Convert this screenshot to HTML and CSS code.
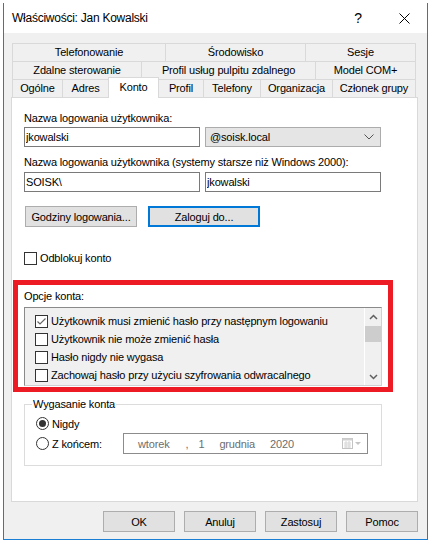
FILE: index.html
```html
<!DOCTYPE html>
<html lang="pl">
<head>
<meta charset="UTF-8">
<title>Właściwości: Jan Kowalski</title>
<link rel="stylesheet" href="styles.css">
</head>
<body>
<div class="window">
  <div class="titlebar">
    <span class="title">Właściwości: Jan Kowalski</span>
    <span class="caption-btn help">?</span>
    <span class="caption-btn">
      <svg width="11" height="11" viewBox="0 0 11 11"><path d="M0.5 0.5 L10.5 10.5 M10.5 0.5 L0.5 10.5" stroke="#000" stroke-width="1" fill="none"/></svg>
    </span>
  </div>

  <div class="client">
    <div class="tabs">
      <div class="tab-row row-1">
        <div class="tab">Telefonowanie</div>
        <div class="tab">Środowisko</div>
        <div class="tab">Sesje</div>
      </div>
      <div class="tab-row row-2">
        <div class="tab">Zdalne sterowanie</div>
        <div class="tab">Profil usług pulpitu zdalnego</div>
        <div class="tab">Model COM+</div>
      </div>
      <div class="tab-row row-3">
        <div class="tab">Ogólne</div>
        <div class="tab">Adres</div>
        <div class="tab active">Konto</div>
        <div class="tab">Profil</div>
        <div class="tab">Telefony</div>
        <div class="tab">Organizacja</div>
        <div class="tab">Członek grupy</div>
      </div>
    </div>

    <div class="panel">
      <div class="field-label">Nazwa logowania użytkownika:</div>
      <div class="field-pair">
        <input class="textbox" type="text" value="jkowalski" readonly>
        <div class="combo">
          <span>@soisk.local</span>
          <svg width="10" height="6" viewBox="0 0 10 6"><path d="M0.5 0.5 L5 5 L9.5 0.5" stroke="#555" stroke-width="1" fill="none"/></svg>
        </div>
      </div>

      <div class="field-label second">Nazwa logowania użytkownika (systemy starsze niż Windows 2000):</div>
      <div class="field-pair second">
        <input class="textbox" type="text" value="SOISK\" readonly>
        <input class="textbox" type="text" value="jkowalski" readonly>
      </div>

      <div class="btn-row">
        <button class="btn wide">Godziny logowania...</button>
        <button class="btn wide focused">Zaloguj do...</button>
      </div>

      <div class="check-row unlock"><span class="checkbox"></span>Odblokuj konto</div>

      <div class="highlight">
        <div class="field-label">Opcje konta:</div>
        <div class="listbox">
          <div class="list-items">
            <div class="check-row">
              <span class="checkbox">
                <svg width="11" height="11" viewBox="0 0 11 11"><path d="M1.5 5.5 L4 8 L9.5 2.5" stroke="#666" stroke-width="1.2" fill="none"/></svg>
              </span>Użytkownik musi zmienić hasło przy następnym logowaniu
            </div>
            <div class="check-row"><span class="checkbox"></span>Użytkownik nie może zmienić hasła</div>
            <div class="check-row"><span class="checkbox"></span>Hasło nigdy nie wygasa</div>
            <div class="check-row"><span class="checkbox"></span>Zachowaj hasło przy użyciu szyfrowania odwracalnego</div>
          </div>
          <div class="scrollbar">
            <div class="arrow">
              <svg width="9" height="6" viewBox="0 0 9 6"><path d="M1 5 L4.5 1.5 L8 5" stroke="#606060" stroke-width="1.5" fill="none"/></svg>
            </div>
            <div class="thumb"></div>
            <div class="track"></div>
            <div class="arrow">
              <svg width="9" height="6" viewBox="0 0 9 6"><path d="M1 1 L4.5 4.5 L8 1" stroke="#606060" stroke-width="1.5" fill="none"/></svg>
            </div>
          </div>
        </div>
      </div>

      <fieldset class="group">
        <legend>Wygasanie konta</legend>
        <div class="radio-row first"><span class="radio checked"></span>Nigdy</div>
        <div class="radio-row">
          <span class="radio"></span>
          <span class="radio-label">Z końcem:</span>
          <div class="datepicker">
            <span class="dp-day">wtorek</span>
            <span class="dp-comma">,</span>
            <span class="dp-num">1</span>
            <span class="dp-month">grudnia</span>
            <span class="dp-year">2020</span>
            <svg class="dp-icon" width="20" height="11" viewBox="0 0 20 11">
              <rect x="0.5" y="0.5" width="10" height="10" fill="#fff" stroke="#c4c4c4"/>
              <rect x="0.5" y="0.5" width="10" height="2" fill="#d0d0d0"/>
              <path d="M2 5H9M2 7H9M2 9H9M4 3V10M7 3V10" stroke="#d6d6d6" stroke-width="1"/>
              <path d="M13 4 L19 4 L16 7 Z" fill="#c4c4c4"/>
            </svg>
          </div>
        </div>
      </fieldset>
    </div>

    <div class="dialog-buttons">
      <button class="btn">OK</button>
      <button class="btn">Anuluj</button>
      <button class="btn">Zastosuj</button>
      <button class="btn">Pomoc</button>
    </div>
  </div>
</div>
</body>
</html>
```

FILE: styles.css
```css
* {
  box-sizing: border-box;
}
body {
  margin: 0;
  background: #ffffff;
  font-family: "Liberation Sans", Arial, sans-serif;
  font-size: 11px;
  letter-spacing: -0.15px;
  color: #000;
}
.window {
  margin: 3px 0 0 3px;
  width: 425px;
  height: 537px;
  border: 1px solid #1a7fd4;
  border-top: none;
  background: #f0f0f0;
  display: flex;
  flex-direction: column;
}

/* title bar */
.titlebar {
  height: 30px;
  background: #fff;
  display: flex;
  align-items: center;
  padding-left: 8px;
}
.title {
  flex: 1;
  font-size: 12px;
  letter-spacing: -0.25px;
}
.caption-btn {
  width: 45px;
  height: 30px;
  display: flex;
  align-items: center;
  justify-content: center;
}
.caption-btn.help {
  font-size: 14px;
  padding-right: 3px;
}

/* client area */
.client {
  flex: 1;
  padding: 10px 9px 0 7px;
}
.tabs {
  margin-left: 1px;
  width: 404px;
}
.tab-row {
  display: grid;
  height: 18px;
  border-top: 1px solid #d9d9d9;
  border-left: 1px solid #d9d9d9;
}
.row-1 {
  grid-template-columns: 153px 140px 110px;
}
.row-2 {
  grid-template-columns: 129px 174px 100px;
}
.row-3 {
  grid-template-columns: 50px 46px 50px 45px 57px 72px 83px;
}
.tab {
  border-right: 1px solid #d9d9d9;
  text-align: center;
  line-height: 17px;
  white-space: nowrap;
  background: #f0f0f0;
}
.tab.active {
  position: relative;
  z-index: 1;
  background: #fff;
  margin: -3px 0 -1px -1px;
  border-top: 1px solid #d9d9d9;
  border-left: 1px solid #d9d9d9;
  line-height: 18px;
}

/* tab page */
.panel {
  height: 405px;
  background: #fff;
  border: 1px solid #d9d9d9;
  padding: 13px 35px 0 12px;
}
.field-label {
  line-height: 15px;
  white-space: nowrap;
}
.field-label.second {
  margin-top: 8px;
}
.field-pair {
  display: grid;
  grid-template-columns: 176px 176px;
  column-gap: 5px;
  margin-top: 1px;
}
.field-pair.second {
  margin-top: 2px;
}
.textbox {
  height: 20px;
  border: 1px solid #7a7a7a;
  padding: 0 1px;
  margin: 0;
  font: inherit;
  letter-spacing: inherit;
  color: #000;
  background: #fff;
  outline: none;
}
.combo {
  height: 20px;
  border: 1px solid #acacac;
  background: #e5e5e5;
  display: flex;
  align-items: center;
  justify-content: space-between;
  padding: 0 6px 0 4px;
}

.btn {
  font: inherit;
  letter-spacing: inherit;
  color: #000;
  height: 21px;
  width: 72px;
  padding: 0;
  border: 1px solid #adadad;
  background: #e1e1e1;
}
.btn.wide {
  width: 112px;
}
.btn.focused {
  border: 2px solid #0078d7;
}
.btn-row {
  display: flex;
  gap: 11px;
  margin: 14px 0 0 1px;
}

.check-row {
  display: flex;
  align-items: center;
  height: 18px;
  white-space: nowrap;
}
.checkbox {
  width: 13px;
  height: 13px;
  border: 1px solid #333;
  background: #fff;
  margin-right: 3px;
  flex: none;
  display: flex;
  align-items: center;
  justify-content: center;
}
.check-row.unlock {
  margin-top: 23px;
  height: 16px;
}

/* red annotation frame */
.highlight {
  margin: 14px -11px 0 -11px;
  border: 5px solid #ed1c24;
  padding: 4px 6px 1px 6px;
}
.listbox {
  margin-top: 3px;
  height: 79px;
  border: 1px solid;
  border-color: #8a8a8a #d0d0d0 #d0d0d0 #8a8a8a;
  background: #f0f0f0;
  display: flex;
}
.list-items {
  flex: 1;
  padding: 4px 0 0 10px;
  overflow: hidden;
}
.scrollbar {
  width: 17px;
  border-left: 1px solid #fff;
  display: flex;
  flex-direction: column;
}
.scrollbar .arrow {
  height: 17px;
  display: flex;
  align-items: center;
  justify-content: center;
}
.scrollbar .thumb {
  height: 16px;
  margin: 1px 0 0 0;
  background: #cdcdcd;
}
.scrollbar .track {
  flex: 1;
}

/* expiry group */
.group {
  margin: 5px 0 0 0;
  padding: 2px 0 11px 11px;
  border: 1px solid #dcdcdc;
}
.group legend {
  margin-left: -4px;
  padding: 0 1px;
  line-height: 15px;
}
.radio-row {
  display: flex;
  align-items: center;
  height: 21px;
}
.radio-row.first {
  height: 19px;
}
.radio {
  width: 13px;
  height: 13px;
  border: 1px solid #333;
  border-radius: 50%;
  background: #fff;
  margin-right: 3px;
  flex: none;
  display: flex;
  align-items: center;
  justify-content: center;
}
.radio.checked::after {
  content: "";
  width: 7px;
  height: 7px;
  border-radius: 50%;
  background: #333;
}
.radio-label {
  width: 71px;
}
.datepicker {
  width: 245px;
  height: 21px;
  border: 1px solid #8c8c8c;
  background: #fff;
  color: #6d6d6d;
  display: flex;
  align-items: center;
  padding-left: 14px;
}
.dp-comma {
  margin-left: 16px;
}
.dp-num {
  margin-left: 10px;
}
.dp-month {
  margin-left: 15px;
}
.dp-year {
  margin-left: 15px;
}
.dp-icon {
  margin-left: auto;
  margin-right: 5px;
}

.dialog-buttons {
  display: flex;
  justify-content: flex-end;
  gap: 9px;
  margin-top: 9px;
}
```
